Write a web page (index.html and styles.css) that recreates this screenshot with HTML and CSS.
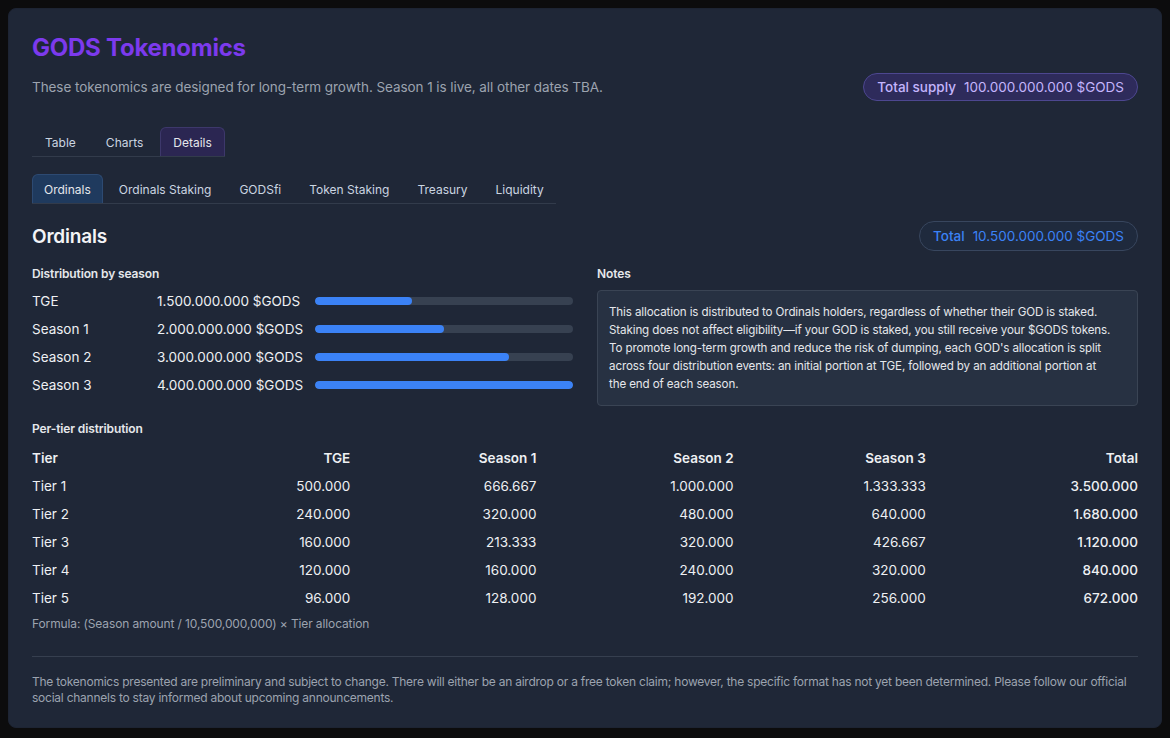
FILE: index.html
```html
<!DOCTYPE html>
<html lang="en">
<head>
    <meta charset="UTF-8">
    <title>GODS Tokenomics</title>
    <link rel="stylesheet" href="styles.css">
</head>
<body>

    <div class="card">

        <!-- Header -->
        <h1 class="title">GODS Tokenomics</h1>
        <div class="intro">
            <p class="subtitle">These tokenomics are designed for long-term growth. Season 1 is live, all other dates TBA.</p>
            <div class="pill pill-supply">
                <span class="pill-label">Total supply</span>
                <span>100.000.000.000 $GODS</span>
            </div>
        </div>

        <!-- Main tabs -->
        <div class="tabs">
            <a class="tab">Table</a>
            <a class="tab">Charts</a>
            <a class="tab active">Details</a>
        </div>

        <!-- Sub tabs -->
        <div class="tabs subtabs">
            <a class="tab active">Ordinals</a>
            <a class="tab">Ordinals Staking</a>
            <a class="tab">GODSfi</a>
            <a class="tab">Token Staking</a>
            <a class="tab">Treasury</a>
            <a class="tab">Liquidity</a>
        </div>

        <!-- Section -->
        <div class="section-head">
            <h2>Ordinals</h2>
            <div class="pill pill-total">
                <span class="pill-label">Total</span>
                <span>10.500.000.000 $GODS</span>
            </div>
        </div>

        <div class="columns">
            <div>
                <h3 class="label">Distribution by season</h3>
                <div class="dist">
                    <span>TGE</span>
                    <span>1.500.000.000 $GODS</span>
                    <div class="bar"><div class="fill" style="width: 37.5%"></div></div>

                    <span>Season 1</span>
                    <span>2.000.000.000 $GODS</span>
                    <div class="bar"><div class="fill" style="width: 50%"></div></div>

                    <span>Season 2</span>
                    <span>3.000.000.000 $GODS</span>
                    <div class="bar"><div class="fill" style="width: 75%"></div></div>

                    <span>Season 3</span>
                    <span>4.000.000.000 $GODS</span>
                    <div class="bar"><div class="fill" style="width: 100%"></div></div>
                </div>
            </div>
            <div>
                <h3 class="label">Notes</h3>
                <p class="notes">
                    This allocation is distributed to Ordinals holders, regardless of whether their GOD is staked.<br>
                    Staking does not affect eligibility—if your GOD is staked, you still receive your $GODS tokens.<br>
                    To promote long-term growth and reduce the risk of dumping, each GOD's allocation is split<br>
                    across four distribution events: an initial portion at TGE, followed by an additional portion at<br>
                    the end of each season.
                </p>
            </div>
        </div>

        <h3 class="label tier-label">Per-tier distribution</h3>
        <table class="tiers">
            <colgroup>
                <col class="c-tier">
                <col class="c-tge">
                <col class="c-s1">
                <col class="c-s2">
                <col class="c-s3">
                <col class="c-total">
            </colgroup>
            <thead>
                <tr>
                    <th>Tier</th>
                    <th>TGE</th>
                    <th>Season 1</th>
                    <th>Season 2</th>
                    <th>Season 3</th>
                    <th>Total</th>
                </tr>
            </thead>
            <tbody>
                <tr><td>Tier 1</td><td>500.000</td><td>666.667</td><td>1.000.000</td><td>1.333.333</td><td>3.500.000</td></tr>
                <tr><td>Tier 2</td><td>240.000</td><td>320.000</td><td>480.000</td><td>640.000</td><td>1.680.000</td></tr>
                <tr><td>Tier 3</td><td>160.000</td><td>213.333</td><td>320.000</td><td>426.667</td><td>1.120.000</td></tr>
                <tr><td>Tier 4</td><td>120.000</td><td>160.000</td><td>240.000</td><td>320.000</td><td>840.000</td></tr>
                <tr><td>Tier 5</td><td>96.000</td><td>128.000</td><td>192.000</td><td>256.000</td><td>672.000</td></tr>
            </tbody>
        </table>
        <p class="formula">Formula: (Season amount / 10,500,000,000) × Tier allocation</p>

        <!-- Footer -->
        <p class="disclaimer">The tokenomics presented are preliminary and subject to change. There will either be an airdrop or a free token claim; however, the specific format has not yet been determined. Please follow our official social channels to stay informed about upcoming announcements.</p>

    </div>

</body>
</html>
```

FILE: styles.css
```css
/* General */
body {
    margin: 0;
    background-color: #0c0c0d;
    font-family: Inter, "Noto Sans", sans-serif;
    color: #e5e7eb;
}

.card {
    margin: 8px;
    padding: 23px 23px 21px;
    background-color: #1f2737;
    border: 1px solid #1d2433;
    border-radius: 8px;
}

/* Header */
.title {
    margin: 0;
    font-size: 24px;
    line-height: 32px;
    font-weight: 700;
    letter-spacing: -0.01em;
    color: #7c3aed;
}

.intro {
    display: flex;
    justify-content: space-between;
    align-items: center;
    margin-top: 9px;
    height: 28px;
}

.subtitle {
    margin: 0;
    font-size: 13.5px;
    letter-spacing: -0.005em;
    color: #9ca3af;
}

.pill {
    display: flex;
    align-items: center;
    gap: 8px;
    padding: 0 13px;
    border-radius: 999px;
    font-size: 13.5px;
}

.pill-label {
    font-weight: 500;
}

.pill-supply {
    height: 26px;
    background-color: #2e2b5b;
    border: 1px solid #4d4790;
    color: #c4b5fd;
}

.pill-total {
    height: 28px;
    background-color: #1f2a3d;
    border: 1px solid #38465e;
    color: #3b82f6;
}

/* Tabs */
.tabs {
    display: inline-flex;
    gap: 4px;
    margin-top: 26px;
    border-bottom: 1px solid #323b4b;
}

.tab {
    padding: 0 12px;
    height: 28px;
    line-height: 29px;
    font-size: 12px;
    white-space: nowrap;
    color: #cbd5e1;
    border: 1px solid transparent;
    border-bottom: none;
    border-radius: 6px 6px 0 0;
    cursor: pointer;
}

.tabs .active {
    background-color: #2b2652;
    border-color: #3d386b;
    color: #e5e7eb;
}

.subtabs {
    display: flex;
    width: max-content;
    margin-top: 17px;
}

.subtabs .tab {
    padding: 0 11px;
}

.subtabs .active {
    background-color: #1f3a5e;
    border-color: #2d4a72;
}

/* Section */
.section-head {
    display: flex;
    justify-content: space-between;
    align-items: center;
    margin-top: 17px;
}

.section-head h2 {
    margin: 0;
    font-size: 19px;
    font-weight: 600;
    letter-spacing: -0.01em;
    color: #f3f4f6;
}

.columns {
    display: grid;
    grid-template-columns: 1fr 1fr;
    gap: 24px;
    margin-top: 15px;
}

.label {
    margin: 0 0 8px;
    font-size: 12px;
    line-height: 16px;
    font-weight: 600;
    letter-spacing: -0.01em;
    color: #e5e7eb;
}

/* Distribution bars */
.dist {
    display: grid;
    grid-template-columns: 113px 146px 1fr;
    grid-auto-rows: 28px;
    column-gap: 12px;
    align-items: center;
    margin-top: -3px;
    font-size: 13.5px;
    white-space: nowrap;
    color: #eef0f3;
}

.bar {
    height: 8px;
    background-color: #374151;
    border-radius: 4px;
    overflow: hidden;
}

.fill {
    height: 100%;
    background-color: #3b82f6;
    border-radius: 4px;
}

.notes {
    margin: 0;
    padding: 12px 11px;
    background-color: #273142;
    border: 1px solid #3a4454;
    border-radius: 4px;
    font-size: 11.6px;
    line-height: 18px;
    letter-spacing: -0.01em;
    white-space: nowrap;
    color: #e5e7eb;
}

/* Per-tier table */
.tier-label {
    margin-top: 15px;
    margin-bottom: 7px;
}

.tiers {
    width: 100%;
    table-layout: fixed;
    border-collapse: collapse;
    font-size: 13.5px;
}

.tiers th,
.tiers td {
    height: 28px;
    padding: 0;
    text-align: right;
    color: #eef0f3;
}

.tiers th {
    font-weight: 600;
}

.tiers th:first-child,
.tiers td:first-child {
    text-align: left;
}

.tiers td:last-child {
    font-weight: 500;
}

.c-tier { width: 200px; }
.c-tge { width: 118px; }
.c-s1 { width: 186px; }
.c-s2 { width: 197px; }
.c-s3 { width: 192px; }
.c-total { width: 212px; }

.formula {
    margin: 4px 0 0;
    font-size: 12px;
    letter-spacing: -0.01em;
    color: #9ca3af;
}

/* Footer */
.disclaimer {
    margin: 25px 0 0;
    padding-top: 17px;
    border-top: 1px solid #363f4f;
    font-size: 12px;
    line-height: 16px;
    letter-spacing: -0.02em;
    color: #9ca3af;
}
```
